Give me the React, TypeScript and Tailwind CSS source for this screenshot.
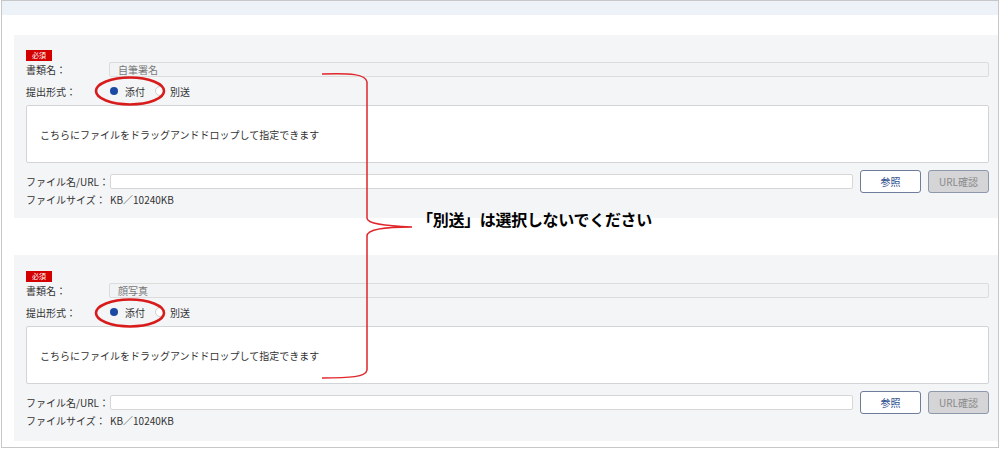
import React from "react";

const font = { fontFamily: '"Noto Sans CJK JP", "Noto Sans", sans-serif' };

function Panel({ name, second }: { name: string; second?: boolean }) {
  return (
    <div
      className={
        second
          ? "ml-[12px] bg-[#f4f5f7] pl-[12px] pr-[9px] pt-[16px] pb-[15px] text-[10px] text-[#333]"
          : "ml-[12px] bg-[#f4f5f7] pl-[12px] pr-[9px] pt-[15px] pb-[13px] text-[10px] text-[#333]"
      }
    >
      <div className="flex h-[11px]">
        <div className="flex w-[26px] items-center justify-center bg-[#d40000] text-[7px] leading-none text-white">必須</div>
      </div>
      <div className="mt-[1px] flex h-[15px] items-center">
        <div className="w-[83px] text-[#333]">書類名：</div>
        <div className="flex h-[15px] flex-1 items-center rounded-[2px] border border-[#dcdcdc] bg-[#f2f3f5] pl-[8px] text-[#777]">{name}</div>
      </div>
      <div className="mt-[4px] flex h-[20px] items-center">
        <div className="w-[83px]">提出形式：</div>
        <div className="flex items-center">
          <span className="ml-[1px] h-[8px] w-[8px] rounded-full bg-[#1b4aa3]" />
          <span className="ml-[7px]">添付</span>
          <span className="ml-[10px] h-[10px] w-[10px] rounded-full border border-[#cfcfcf] bg-white" />
          <span className="ml-[5px]">別送</span>
        </div>
      </div>
      <div className="mt-[4px] flex h-[58px] items-center rounded-[2px] border border-[#d2d4d8] bg-white pl-[13px]">
        こちらにファイルをドラッグアンドドロップして指定できます
      </div>
      <div className="mt-[7px] flex h-[23px] items-center">
        <div className="w-[84px] whitespace-nowrap">ファイル名/URL：</div>
        <div className="h-[15px] flex-1 rounded-[2px] border border-[#d6d6d6] bg-white" />
        <div className="ml-[7px] flex h-[23px] w-[61px] items-center justify-center rounded-[3px] border border-[#6e7d9a] bg-white text-[10px] text-[#2b4a8c]">参照</div>
        <div className="ml-[7px] flex h-[23px] w-[61px] items-center justify-center rounded-[3px] border border-[#8d98ad] bg-[#d5d5d7] text-[10px] text-[#8a8a8a]">URL確認</div>
      </div>
      <div className="flex h-[12px] items-center">
        <div className="w-[84px] whitespace-nowrap">ファイルサイズ：</div>
        <div>KB／10240KB</div>
      </div>
    </div>
  );
}

export default function App() {
  return (
    <div className="relative h-[449px] w-[1000px] overflow-hidden bg-white" style={font}>
      <div className="ml-[1px] h-[448px] w-[998px] border border-[#c7c7c7] bg-white">
        <div className="h-[14px] bg-[#edf1f8]" />
        <div className="h-[20px]" />
        <Panel name="自筆署名" />
        <div className="h-[37px]" />
        <Panel name="顔写真" second />
      </div>
      <svg className="pointer-events-none absolute left-0 top-0" width="1000" height="449" viewBox="0 0 1000 449">
        <ellipse cx="130" cy="91" rx="34" ry="13.5" fill="none" stroke="#d81c1c" strokeWidth="2.6" />
        <ellipse cx="130" cy="313" rx="34" ry="13.5" fill="none" stroke="#d81c1c" strokeWidth="2.6" />
        <path
          d="M322,74 C350,73 366,74 367,82 L367,218 C367,224 385,226 412,227 C385,227 367,229 367,236 L367,370 C366,377 350,378 322,378"
          fill="none"
          stroke="#e0262a"
          strokeWidth="1.5"
        />
      </svg>
      <div className="absolute left-[417px] top-[208px] text-[16px] font-bold leading-[22px] tracking-[-0.3px] text-black">「別送」は選択しないでください</div>
    </div>
  );
}
